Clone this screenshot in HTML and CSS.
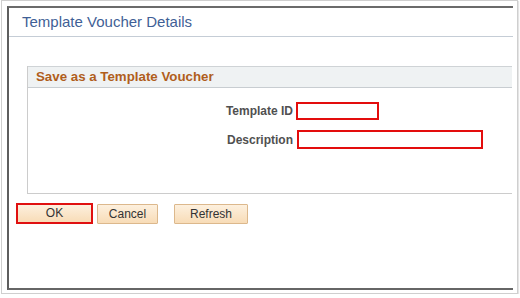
FILE: index.html
```html
<!DOCTYPE html>
<html>
<head>
<meta charset="utf-8">
<link rel="stylesheet" href="styles.css">
</head>
<body>
<div class="frame">
  <div class="dialog">
    <div class="titlebar">Template Voucher Details</div>
    <div class="group">
      <div class="group-head">Save as a Template Voucher</div>
      <div class="group-body">
        <div class="row">
          <label class="lbl">Template ID</label>
          <span class="field field-id"></span>
        </div>
        <div class="row row-desc">
          <label class="lbl">Description</label>
          <span class="field field-desc"></span>
        </div>
      </div>
    </div>
    <div class="buttons">
      <span class="hl"><button class="btn btn-ok">OK</button></span>
      <button class="btn btn-cancel">Cancel</button>
      <button class="btn btn-refresh">Refresh</button>
    </div>
  </div>
</div>
</body>
</html>
```

FILE: styles.css
```css
html, body {
  margin: 0;
  padding: 0;
  background: #ffffff;
  font-family: "Liberation Sans", Arial, sans-serif;
}

.frame {
  margin-left: 1px;
  width: 515px;
  height: 292px;
  border: 1px solid #cfcfcf;
  box-shadow: 1px 1px 1px #e4e4e4;
  overflow: hidden;
}

.dialog {
  margin-left: 5px;
  margin-top: 5px;
  width: 504px;
  height: 280px;
  border-top: 2px solid #6b6b6b;
  border-left: 2px solid #5e5e5e;
  border-bottom: 2px solid #666666;
  background: #ffffff;
}

.titlebar {
  box-sizing: border-box;
  height: 29px;
  padding-top: 5px;
  padding-left: 13px;
  border-bottom: 1px solid #c5cdd6;
  font-size: 15px;
  color: #3f5f96;
  line-height: 18px;
}

.group {
  margin-top: 29px;
  margin-left: 18px;
  margin-right: 1px;
  border-left: 1px solid #cccccc;
  border-bottom: 1px solid #cccccc;
  height: 127px;
}

.group-head {
  height: 20px;
  background: #eff2f3;
  border-top: 1px solid #cfd3d6;
  border-bottom: 1px solid #c8cdd1;
  padding-left: 8px;
  font-size: 13.3px;
  font-weight: bold;
  color: #b05e1c;
  line-height: 20px;
}

.group-body {
  padding-top: 14px;
}

.row {
  display: flex;
  align-items: center;
  height: 18px;
}

.row-desc {
  margin-top: 10px;
  height: 19px;
}

.lbl {
  width: 265px;
  text-align: right;
  font-size: 12px;
  font-weight: bold;
  color: #505050;
}

.field {
  display: block;
  box-sizing: border-box;
  border: 2px solid #e30d0d;
  background: #ffffff;
  margin-left: 3px;
}

.field-id {
  width: 83px;
  height: 18px;
}

.field-desc {
  margin-left: 4px;
  width: 186px;
  height: 19px;
}

.buttons {
  display: flex;
  align-items: center;
  margin-top: 9px;
  padding-left: 7px;
}

.hl {
  display: block;
  border: 2px solid #e01010;
  height: 21px;
  box-sizing: border-box;
}

.btn {
  display: block;
  box-sizing: border-box;
  height: 20px;
  margin: 0;
  padding: 0;
  border: 1px solid #dcb88c;
  border-radius: 1px;
  background: linear-gradient(#fdf0de, #f8dcb7);
  font-family: "Liberation Sans", Arial, sans-serif;
  font-size: 12px;
  color: #333333;
  line-height: 18px;
}

.btn-ok {
  width: 73px;
  height: 17px;
  border: none;
  line-height: 17px;
}

.btn-cancel {
  margin-left: 4px;
  width: 61px;
}

.btn-refresh {
  margin-left: 16px;
  width: 74px;
}
```
